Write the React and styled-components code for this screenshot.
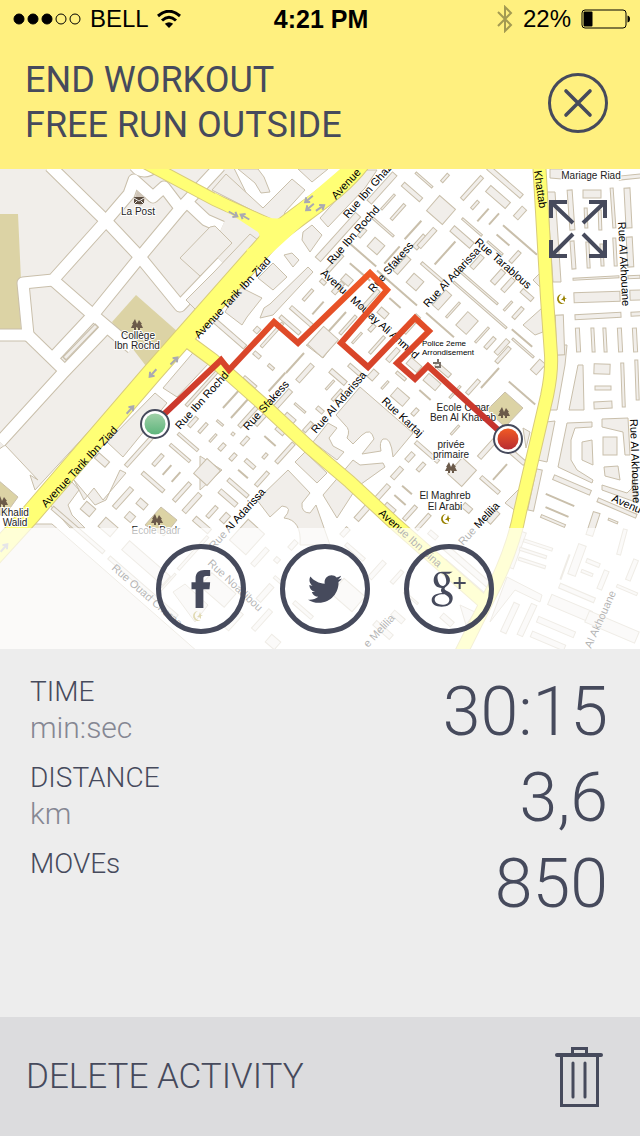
import styled, { createGlobalStyle } from "styled-components"
import { FaTwitter } from "react-icons/fa"


// city blocks: [center x, center y, length, thickness, angle]
const N = -48;
const S = 41;

const strips = [
    // north
    [382, 188, 38, 6, N], [338, 237, 60, 7, N], [388, 202, 20, 2, N], [398, 212, 20, 3, N], [412, 192, 24, 5, S],
    [383, 227, 28, 2, S], [413, 230, 24, 1, N], [420, 242, 16, 6, N], [376, 246, 13, 12, S], [392, 255, 22, 1, N],
    [362, 233, 10, 4, N], [335, 263, 22, 4, N], [363, 255, 34, 1, S], [360, 272, 26, 1, S], [402, 265, 20, 6, N],
    [415, 282, 13, 12, S], [397, 288, 52, 1, S], [347, 280, 10, 8, S], [323, 282, 6, 4, S], [338, 288, 14, 5, N],
    [383, 313, 10, 7, S], [395, 303, 14, 1, S], [308, 295, 14, 3, N], [318, 308, 16, 1, N], [302, 317, 30, 4, S],
    [290, 325, 26, 4, S], [272, 335, 32, 3, N], [337, 322, 26, 1, N], [348, 325, 24, 3, N], [323, 342, 24, 20, N],
    [357, 338, 14, 2, N], [257, 330, 6, 5, N], [230, 334, 40, 5, S], [370, 300, 26, 4, N], [372, 328, 8, 4, N],
    [411, 324, 22, 6, N], [377, 345, 22, 3, N],
    // north east
    [424, 180, 22, 2, S], [445, 178, 10, 3, N], [472, 188, 30, 4, N], [505, 182, 44, 5, S], [498, 197, 26, 8, S],
    [441, 210, 21, 20, S], [475, 205, 10, 3, N], [483, 215, 16, 1, N], [494, 219, 14, 1, N], [520, 213, 13, 6, N],
    [472, 227, 26, 2, S], [462, 237, 26, 7, S], [427, 238, 24, 5, N], [445, 253, 30, 1, N], [503, 240, 16, 1, S],
    [520, 240, 44, 1, S], [477, 262, 16, 5, N], [495, 248, 20, 2, S], [432, 272, 28, 3, S], [478, 287, 52, 2, S],
    [515, 257, 14, 4, N], [498, 277, 16, 6, N], [508, 285, 16, 5, N], [527, 295, 14, 5, S], [480, 305, 70, 2, S],
    [442, 300, 20, 8, N], [518, 313, 14, 4, N], [508, 306, 12, 2, N], [467, 323, 18, 14, N], [453, 310, 20, 2, N],
    [522, 338, 26, 1, S], [482, 335, 20, 2, N], [490, 343, 14, 4, N], [502, 347, 18, 5, N], [440, 325, 36, 1, S],
    // behind the right avenue
    [571, 210, 40, 5, 86], [592, 194, 18, 8, 0], [586, 218, 20, 3, 88], [600, 220, 20, 3, 88], [613, 208, 40, 3, 86],
    [628, 208, 40, 6, 87], [573, 255, 28, 4, 86], [588, 255, 26, 3, 87], [602, 255, 22, 3, 87], [615, 252, 28, 3, 87],
    [630, 252, 30, 6, 87], [596, 278, 46, 2, -3], [634, 277, 12, 3, -3], [597, 297, 46, 10, -2], [637, 295, 14, 10, -2],
    [598, 316, 46, 5, -3], [637, 314, 12, 4, -3], [560, 335, 40, 8, 88], [578, 340, 24, 4, 87], [593, 340, 24, 3, 87],
    [605, 340, 24, 3, 87], [620, 340, 24, 4, 87], [635, 340, 24, 4, 87], [602, 369, 16, 10, 2], [603, 388, 16, 4, 0],
    [603, 405, 18, 7, -3], [623, 385, 44, 3, 88], [637, 380, 40, 3, 88], [610, 446, 14, 18, 0], [572, 485, 40, 5, 23],
    [617, 508, 42, 4, 23], [560, 500, 30, 1, 23], [557, 512, 24, 1, 23], [553, 521, 26, 3, 23], [593, 524, 24, 7, -72],
    [535, 490, 42, 6, -78], [613, 521, 10, 2, 23], [630, 177, 22, 4, -6],
    // center
    [257, 355, 8, 4, S], [271, 367, 7, 3, S], [295, 363, 26, 1, N], [305, 373, 22, 5, N], [338, 377, 20, 5, S],
    [355, 370, 16, 4, S], [373, 375, 10, 7, N], [385, 385, 10, 2, N], [330, 385, 12, 2, N], [337, 395, 14, 3, N],
    [400, 397, 16, 11, S], [320, 410, 8, 4, S], [415, 412, 8, 4, N], [300, 408, 14, 2, S], [290, 418, 12, 5, S],
    [277, 382, 24, 1, N], [250, 382, 16, 3, S], [282, 400, 26, 5, N], [263, 417, 22, 4, N], [248, 417, 26, 4, N],
    [232, 398, 26, 1, N], [240, 408, 26, 1, N], [220, 423, 8, 2, S], [233, 434, 3, 3, S], [213, 438, 10, 2, N],
    [245, 441, 10, 4, N], [222, 447, 8, 4, N], [233, 457, 8, 4, N], [270, 441, 14, 1, S], [280, 431, 10, 4, S],
    [265, 456, 6, 3, N], [285, 453, 26, 4, N], [308, 427, 12, 4, N], [250, 464, 12, 4, S], [243, 474, 12, 1, S],
    [262, 479, 18, 4, N], [238, 488, 26, 4, S], [228, 498, 22, 5, S], [212, 512, 14, 4, N], [225, 518, 10, 6, N],
    [380, 495, 26, 5, N], [363, 512, 20, 6, N], [397, 473, 14, 5, N], [410, 457, 10, 5, N], [421, 467, 10, 4, N],
    [407, 490, 12, 1, S], [400, 500, 14, 1, S], [410, 513, 18, 4, N], [390, 508, 12, 5, S], [393, 355, 16, 5, N],
    [401, 376, 12, 3, S], [414, 365, 14, 8, S],
    // left of the red pin
    [432, 382, 16, 9, S], [473, 387, 18, 4, N], [490, 378, 26, 1, N], [503, 355, 20, 4, N], [523, 348, 28, 2, S],
    [538, 367, 14, 8, N], [522, 393, 34, 1, S], [455, 430, 12, 2, N], [488, 448, 26, 5, N], [427, 452, 30, 4, S],
    [515, 455, 26, 5, S], [462, 472, 22, 19, N], [490, 485, 24, 4, S], [500, 472, 20, 1, N], [467, 508, 10, 6, S],
    [493, 517, 14, 6, N], [423, 522, 20, 4, N], [443, 370, 18, 5, S], [455, 392, 16, 2, N], [425, 395, 14, 1, S],
    // around the green pin
    [144, 446, 54, 4, N], [205, 385, 56, 3, N], [188, 442, 26, 3, S], [180, 453, 26, 3, S], [158, 460, 14, 4, N],
    [167, 470, 12, 1, N], [176, 477, 12, 1, N], [153, 482, 28, 4, S], [193, 422, 12, 4, N], [203, 428, 12, 3, N],
    [207, 472, 20, 18, N], [182, 492, 24, 4, N], [192, 503, 24, 5, N], [202, 525, 20, 6, S], [123, 498, 26, 5, N],
    [142, 504, 10, 7, S], [130, 517, 8, 8, S], [88, 509, 12, 10, S], [102, 460, 14, 7, S], [108, 527, 16, 12, S],
    // bottom
    [78, 530, 68, 4, S], [143, 587, 90, 4, S], [146, 563, 54, 12, S], [168, 582, 22, 2, N], [193, 553, 44, 3, N],
    [218, 590, 32, 18, S], [233, 620, 22, 8, N], [247, 537, 28, 22, N], [260, 557, 22, 5, N], [277, 560, 5, 5, S],
    [265, 593, 20, 6, N], [262, 620, 26, 5, N], [273, 642, 12, 10, S], [278, 580, 10, 3, S], [293, 545, 10, 5, N],
    [303, 610, 24, 4, S], [345, 532, 10, 5, N], [355, 552, 24, 4, S], [348, 595, 28, 20, S], [377, 570, 22, 5, N],
    [397, 577, 16, 4, N], [433, 535, 10, 5, S], [468, 567, 60, 6, S], [466, 580, 58, 5, S], [447, 620, 14, 6, S],
    [383, 630, 22, 6, S], [398, 617, 14, 6, S], [411, 598, 18, 2, S], [517, 550, 38, 6, -70], [538, 545, 30, 3, 18],
    [533, 553, 28, 3, 18], [532, 563, 28, 3, 18], [565, 567, 26, 1, -70], [577, 560, 32, 8, -70], [593, 563, 14, 4, 22],
    [587, 573, 12, 3, 22], [622, 542, 26, 4, -75], [510, 618, 32, 6, -65], [527, 620, 34, 6, -65], [577, 593, 38, 5, 23],
    [570, 608, 44, 11, 23], [556, 627, 40, 6, 23], [548, 641, 36, 6, 23], [612, 627, 54, 12, 23], [627, 590, 22, 3, 23],
    [603, 580, 20, 5, -68], [632, 570, 22, 5, -68],
]

const blocks = [
    "212,190 226,174 263,208 292,179 305,190 285,212 282,222 275,222",
    "238,169 255,183 261,193 270,192 264,177 258,169",
    "298,169 312,182 328,169",
    "210,227 215,226 232,243 200,276 180,258",
    "250,234 262,243 208,300 196,310 186,300 214,272",
    "312,225 322,235 310,252 302,240 303,232",
    "320,218 328,227 365,188 377,170 363,170",
    "284,255 292,253 299,260 293,267",
    "273,263 287,277 273,290 258,278",
    "308,267 313,272 273,315 260,318 264,308 270,304",
    "240,287 262,298 247,317 242,325 225,312",
    "523,325 542,308 543,332 535,335",
    "533,280 540,273 541,288",
    "547,192 555,192 561,282 553,282",
    "557,345 567,345 565,365 557,410 548,410 553,385",
    "578,365 583,365 584,410 569,410",
    "546,422 555,421 547,462 538,460",
    "567,423 592,422 592,427 575,428 571,440 571,460 577,470 593,480 592,483 558,467",
    "602,419 628,418 630,455 625,455 623,432 602,427",
    "582,442 592,440 593,465 582,460",
    "604,467 618,466 620,480 605,476",
    "602,485 627,493 632,488 633,470 638,503 602,490",
    "505,503 525,483 517,512",
    "523,428 530,432 526,448",
    "306,345 333,345 323,358",
    "200,456 222,470 200,490",
    "328,423 337,428 329,438 333,446 344,452 337,460 313,442",
    "295,462 305,452 327,473 317,483",
    "353,460 360,465 383,463 385,467 357,487 337,518 323,495",
    "163,388 197,348 210,362 177,397",
    "155,393 167,403 123,457 107,442",
    "74,480 95,505 106,500 120,470 126,473 103,500 94,488 84,500",
    "50,505 72,482 79,490 68,505 72,515 85,528 70,528",
    "173,592 185,584 208,605 195,622",
    "507,577 542,595 540,602 515,590 490,622",
    "460,605 475,612 466,625",
    "550,178 550,169 562,169 562,179",
]

const yellowRoads = [
    ["M362 160 C340 190 310 206 273 236 L153 372 L30 515 L-20 570", 19],
    ["M140 160 L215 200 L268 224", 11],
    ["M190 343 L213 360 L267 408 L310 448 L350 482 L393 522 L486 604", 12],
    ["M539 160 L547 298 L551 355 Q552 372 547 396 L520 512 Q514 545 495 585 L460 655", 12],
]

const whiteRoads = [
    "M50 166 L107 222 L140 257 L180 306 L222 262",
    "M180 208 L164 187 L153 197 L134 180 L129 194 L105 222 L53 280 L23 283 L28 335 L-5 335",
    "M28 335 L64 370",
    "M220 166 L180 209 L140 257 L93 315 L50 361",
    "M190 205 L206 220 L222 227",
    "M53 280 L93 315 L132 348",
    "M107 327 L62 374 L0 442",
    "M135 166 Q143 176 156 166",
]

const labels = [
    [199, 339, -47, "Avenue Tarik Ibn Ziad"], [46, 508, -47, "Avenue Tarik Ibn Ziad"], [336, 200, -47, "Avenue"],
    [348, 219, -49, "Rue Ibn Ghaz"], [332, 265, -49, "Rue Ibn Rochd"], [373, 293, -49, "Rue Sfakess"],
    [320, 274, 42, "Avenue Moulay Ali Ahmed"], [428, 308, -47, "Rue Al Adarissa"], [474, 243, 41, "Rue Tarablous"],
    [618, 222, 87, "Rue Al Akhouane"], [534, 171, 82, "Khattab"], [381, 402, 43, "Rue Kartaj"],
    [316, 434, -49, "Rue Al Adarissa"], [248, 431, -48, "Rue Sfakess"], [180, 430, -48, "Rue Ibn Rochd"],
    [214, 550, -48, "Rue Al Adarissa"], [378, 514, 42, "Avenue Ibn Sina"], [463, 546, -47, "Rue Melilia"],
    [368, 648, -47, "e Melilia"], [591, 649, -66, "Al Akhouane"], [111, 569, 41, "Rue Ouad Cheraa"],
    [207, 564, 43, "Rue Noadibou"], [630, 419, 88, "Rue Al Akhouane"], [611, 501, 24, "Avenu"],
]

const places = [
    [138, 215, "La Post"], [138, 339, "Collège"], [137, 349, "Ibn Rochd"], [591, 179, "Mariage Riad"],
    [463, 411, "Ecole Omar"], [463, 421, "Ben Al Khattab"], [451, 448, "privée"], [451, 458, "primaire"],
    [445, 499, "El Maghreb"], [445, 510, "El Arabi"], [15, 516, "Khalid"], [15, 526, "Walid"], [156, 534, "Ecole Badr"],
]

const trees = [[137, 324], [157, 519], [504, 412], [451, 467], [2, 501]];
const moons = [[561, 299], [445, 519], [197, 616]];
const laneArrows = [
    [233, 214, 30], [245, 217, 210], [309, 199, 140], [310, 207, 140], [320, 208, -35],
    [153, 373, 132], [174, 361, -45], [130, 410, -48], [4, 548, -48],
];


export default function App() {

    const stats = [
        { name: "TIME", unit: "min:sec", value: "30:15" },
        { name: "DISTANCE", unit: "km", value: "3,6" },
        { name: "MOVEs", unit: "", value: "850" },
    ]

    return (
        <Page>
            <GlobalStyle />
            <Header>
                <StatusBar />
                <TitleRow>
                    <h1>END WORKOUT<br />FREE RUN OUTSIDE</h1>
                    <IconButton aria-label="Close">
                        <svg width="60" height="60" viewBox="0 0 60 60" fill="none" stroke="#464a5c" strokeWidth="3">
                            <circle cx="30" cy="30" r="28.5" />
                            <path d="M18 18 L42 42 M42 18 L18 42" strokeWidth="3.6" strokeLinecap="round" />
                        </svg>
                    </IconButton>
                </TitleRow>
            </Header>
            <MapArea>
                <CityMap />
                <ExpandButton aria-label="Full screen">
                    <svg width="60" height="60" viewBox="0 0 60 60" fill="none" stroke="#464a5c" strokeWidth="4">
                        <path d="M3 19 V3 H19 M3 3 L25 24" />
                        <path d="M41 3 H57 V19 M57 3 L35 24" />
                        <path d="M3 41 V57 H19 M3 57 L25 35" />
                        <path d="M41 57 H57 V41 M57 57 L35 35" />
                    </svg>
                </ExpandButton>
                <ShareBar>
                    <ShareLink href="#facebook" aria-label="Facebook">
                        <svg width="20" height="38" viewBox="576 150 56 112" fill="currentColor">
                            <path d="M588 262V207H576V186H588V175C588 158 598 150 614 150H631V168H620C613 168 611 171 611 176V186H631L629 207H611V262Z" />
                        </svg>
                    </ShareLink>
                    <ShareLink href="#twitter" aria-label="Twitter">
                        <FaTwitter size={34} />
                    </ShareLink>
                    <ShareLink href="#google" aria-label="Google plus">
                        <svg width="36" height="36" viewBox="18 18 106 108" fill="currentColor" fillRule="evenodd">
                            <path d="M50 20 H82 L72 26 H62 C78 36 78 54 62 65 C55 70 57 74 65 78 C78 84 83 92 82 102 C80 118 66 125 49 125 C31 125 19 118 19 105 C19 93 31 85 51 84 C46 80 46 74 49 69 C34 69 25 59 25 46 C25 30 36 20 50 20 Z M48 25 C39 25 35 32 37 43 C39 56 46 64 54 63 C62 61 64 53 62 43 C60 32 55 25 48 25 Z M54 88 C38 88 28 94 28 103 C28 113 38 119 51 119 C64 119 72 113 72 104 C72 96 67 94 58 88 Z" />
                            <path d="M85 51 H100 V36 H106 V51 H121 V57 H106 V72 H100 V57 H85 Z" />
                        </svg>
                    </ShareLink>
                </ShareBar>
            </MapArea>
            <Stats>
                {stats.map(({ name, unit, value }) => (
                    <StatRow key={name}>
                        <dt>{name}<small>{unit}</small></dt>
                        <dd>{value}</dd>
                    </StatRow>
                ))}
            </Stats>
            <DeleteButton>
                DELETE ACTIVITY
                <svg width="48" height="62" viewBox="0 0 48 62" fill="none" stroke="#464a5c" strokeWidth="3">
                    <path d="M17.500 8 V2.500 H31.500 V8" />
                    <path d="M2 9 H46" strokeWidth="4" strokeLinecap="round" />
                    <path d="M6.500 9 V59.500 H42.500 V9" />
                    <path d="M18 17 V51 M30 17 V51" strokeLinecap="round" />
                </svg>
            </DeleteButton>
        </Page>
    )
}

function StatusBar() {
    return (
        <DivStatus>
            <Carrier>
                <svg width="70" height="14" viewBox="0 0 70 14" stroke="#000">
                    {[7, 21, 35, 49, 63].map((x, i) => (
                        <circle key={x} cx={x} cy="7" r="5" fill={i < 3 ? "#000" : "none"} />
                    ))}
                </svg>
                BELL
                <svg width="24" height="18" viewBox="0 0 24 18" fill="none" stroke="#000" strokeWidth="3">
                    <path d="M1 6 Q12 -3.500 23 6" />
                    <path d="M5 10.500 Q12 4 19 10.500" />
                    <path d="M12 18 L7.800 13.800 Q12 10.500 16.200 13.800 Z" fill="#000" stroke="none" />
                </svg>
            </Carrier>
            <strong>4:21 PM</strong>
            <Power>
                <svg width="16" height="28" viewBox="0 0 16 28" fill="none" stroke="#a39a52" strokeWidth="2">
                    <path d="M1 7 L14 20 L8 26 V2 L14 8 L1 21" />
                </svg>
                22%
                <svg width="49" height="20" viewBox="0 0 49 20">
                    <rect x="1" y="1" width="44" height="18" rx="3" fill="none" stroke="#000" />
                    <rect x="2.500" y="2.500" width="9" height="15" rx="1" />
                    <path d="M46.500 6.500 Q49 7 49 10 Q49 13 46.500 13.500 Z" />
                </svg>
            </Power>
        </DivStatus>
    )
}

function CityMap() {
    return (
        <MapSvg viewBox="0 169 640 480" preserveAspectRatio="xMidYMid slice" role="img" aria-label="Workout route">
            <defs>
                <linearGradient id="route" gradientUnits="userSpaceOnUse" x1="0" y1="270" x2="0" y2="440">
                    <stop offset="0" stopColor="#f15a24" />
                    <stop offset="1" stopColor="#c1302f" />
                </linearGradient>
                <linearGradient id="start" x1="0" y1="0" x2="0" y2="1">
                    <stop offset="0" stopColor="#a0d0a8" />
                    <stop offset="1" stopColor="#5eb57c" />
                </linearGradient>
                <linearGradient id="finish" x1="0" y1="0" x2="0" y2="1">
                    <stop offset="0" stopColor="#f15a24" />
                    <stop offset="1" stopColor="#b82c32" />
                </linearGradient>
            </defs>

            <g fill="#f1eeea" stroke="#c9bfab">
                <polygon points="-2,160 230,160 262,225 262,243 35,490 30,475 38,480 5,445 -2,450" />
                <polygon points="-2,560 35,524 52,524 198,652 -2,652" />
            </g>
            <polygon points="-2,214 18,214 21,280 18,290 21,329 -2,330" fill="#dcd3a5" />
            <polygon points="136,295 178,332 146,366 112,322" fill="#dcd3a5" />
            {[["#c9bfab", 13], ["#fff", 11]].map(([color, width]) => (
                <g key={color} fill="none" stroke={color} strokeWidth={width} strokeLinejoin="round">
                    {whiteRoads.map(d => <path key={d} d={d} />)}
                </g>
            ))}
            <path d="M97 325 L64 359" stroke="#c9bfab" strokeWidth="5" />
            <path d="M96 326 L65 358" stroke="#f1eeea" strokeWidth="3" />

            <g fill="#f1eeea" stroke="#c9bfab">
                {blocks.map(points => <polygon key={points} points={points} />)}
                <path d="M360 387 L413 433 L393 457 Q391 436 383 439 Q379 442 381 451 L362 454 L374 439 Q371 427 362 435 L353 444 L347 438 Q351 430 345 425 L336 415 Z" />
                <path d="M288 470 L310 493 L302 503 Q301 513 310 513 L316 505 L323 525 L330 545 H300 Q302 520 284 518 Q294 507 282 506 L270 517 L257 500 Z" />
                {strips.map(([x, y, length, width, angle]) => (
                    <rect
                        key={`${x}-${y}`}
                        x={x - length / 2}
                        y={y - width / 2}
                        width={length}
                        height={width}
                        transform={`rotate(${angle} ${x} ${y})`}
                    />
                ))}
            </g>
            <g fill="#dcd3a5" stroke="#c9bfab">
                <polygon points="505,392 523,408 505,427 487,410" />
                <polygon points="161,507 177,520 164,536 145,525" />
                <polygon points="-2,480 18,497 5,515 -2,515" />
            </g>

            {[["#d9cc7a", 2], ["#ffff75", 0]].map(([color, extra]) => (
                <g key={color} fill="none" stroke={color}>
                    {yellowRoads.map(([d, width]) => <path key={d} d={d} strokeWidth={width + extra} />)}
                </g>
            ))}
            <path d="M215 193 Q270 225 284 217 L345 165 H368 L262 262 L246 250 Q264 240 258 232 L215 204 Z" fill="#ffff75" />

            <g fill="none" stroke="#aaa9b2" strokeWidth="2">
                {laneArrows.map(([x, y, angle]) => (
                    <path key={`${x}-${y}`} d="M-5 0 H5 M1 -3 L5 0 L1 3" transform={`translate(${x} ${y}) rotate(${angle})`} />
                ))}
            </g>

            <MapText>
                {labels.map(([x, y, angle, text]) => (
                    <text key={`${x}-${y}`} transform={`translate(${x} ${y}) rotate(${angle})`}>{text}</text>
                ))}
            </MapText>
            <PlaceText>
                {places.map(([x, y, text]) => <text key={`${x}-${y}`} x={x} y={y}>{text}</text>)}
            </PlaceText>
            <SmallText>
                <text x="422" y="346">Police 2eme</text>
                <text x="422" y="355">Arrondisement</text>
            </SmallText>

            {trees.map(([x, y]) => (
                <path
                    key={x}
                    d="M-2 -5 L-5 0 H-4 L-6 4 H-3 V6 H-1 V3 L1 4 V6 H3 V4 H6 L4 0 H5 L2 -4 L0 0 Z"
                    fill="#6b5a4a"
                    transform={`translate(${x} ${y})`}
                />
            ))}
            {moons.map(([x, y]) => (
                <g key={x} fill="#998200" transform={`translate(${x} ${y})`}>
                    <path d="M1 -5 A5 5 0 1 0 4 4 A4 4 0 0 1 1 -5 Z" />
                    <path d="M3 -4 L4 -1 L6 -1 L4 0 L4 3 L2 1 L0 1 L2 -1 Z" />
                </g>
            ))}
            <path d="M137 191 L146 198 L141 206 L134 202 Z" fill="#cfc5b8" />
            <rect x="134" y="197" width="10" height="7" fill="#5c4d40" />
            <path d="M134 198 L139 201 L144 198 M134 204 L137 201 M144 204 L141 201" fill="none" stroke="#eee" />
            <path d="M433 363 H440 V367 H435 M438 359 V364" fill="none" stroke="#7a7169" strokeWidth="2" />

            <path
                d="M160 418 L221 360 L229 370 L274 322 L298 343 L370 273 L387 290 L341 343 L368 367 L415 318 L429 331 L397 363 L415 379 L428 366 L508 439"
                fill="none"
                stroke="url(#route)"
                strokeWidth="6"
            />
            <Pin x={155} y={424} fill="url(#start)" />
            <Pin x={508} y={439} fill="url(#finish)" />
        </MapSvg>
    )
}

function Pin({ x, y, fill }) {
    return (
        <g>
            <circle cx={x} cy={y} r="14" fill="#fff" stroke="#464a5c" strokeWidth="2" />
            <circle cx={x} cy={y} r="10.500" fill={fill} />
        </g>
    )
}


const GlobalStyle = createGlobalStyle`
    * {
        box-sizing: border-box;
    }

    body, h1, dl, dt, dd{
        margin: 0;
    }

    button{
        border: none;
        padding: 0;
        background: none;
        cursor: pointer;
    }

    svg{
        display: block;
        flex-shrink: 0;
    }
`

const Page = styled.div`
    min-height: 100vh;
    display: flex;
    flex-direction: column;

    font-family: Roboto, sans-serif;
    color: #464a5c;
    background-color: #ededed;
`

const Header = styled.header`
    padding-bottom: 21px;
    background-color: #fff07f;
`

const DivStatus = styled.div`
    height: 38px;
    padding: 0 10px 0 12px;

    display: grid;
    grid-template-columns: 1fr auto 1fr;
    align-items: center;

    font-family: "Liberation Sans", Arial, sans-serif;
    font-size: 24px;
    line-height: 38px;
    color: #000;

    strong{
        font-size: 25px;
    }
`

const Carrier = styled.div`
    display: flex;
    align-items: center;
    gap: 8px;
`

const Power = styled(Carrier)`
    justify-content: flex-end;
    gap: 10px;
`

const TitleRow = styled.div`
    padding: 20px 32px 0 25px;

    display: flex;
    justify-content: space-between;
    align-items: center;

    h1{
        font-size: 36px;
        font-weight: 400;
        line-height: 45px;
    }
`

const IconButton = styled.button`
    width: 60px;
    height: 60px;
`

const MapArea = styled.section`
    position: relative;
    aspect-ratio: 4 / 3;
    overflow: hidden;
    background-color: #fff;
`

const MapSvg = styled.svg`
    width: 100%;
    height: 100%;
`

const MapText = styled.g`
    font-family: "Liberation Sans", Arial, sans-serif;
    font-size: 11px;
    fill: #000;
`

const PlaceText = styled(MapText)`
    font-size: 10px;
    text-anchor: middle;
    fill: #222;
    stroke: #fff;
    stroke-width: 2px;
    paint-order: stroke;
`

const SmallText = styled(MapText)`
    font-size: 8px;
`

const ExpandButton = styled(IconButton)`
    position: absolute;
    top: 30px;
    right: 32px;
`

const ShareBar = styled.nav`
    position: absolute;
    left: 0;
    right: 0;
    bottom: 0;
    height: 121px;
    padding-left: 10px;

    display: flex;
    justify-content: center;
    align-items: center;
    gap: 34px;

    background-color: rgba(255, 255, 255, 0.7);
`

const ShareLink = styled.a`
    width: 90px;
    height: 90px;

    display: flex;
    justify-content: center;
    align-items: center;

    border: 5px solid #464a5c;
    border-radius: 50%;
    color: #464a5c;
`

const Stats = styled.dl`
    flex: 1;
    padding: 25px 32px 0 30px;
    font-weight: 300;
`

const StatRow = styled.div`
    height: 86px;
    display: flex;
    justify-content: space-between;

    dt{
        font-size: 28px;
        line-height: 36px;
    }

    small{
        display: block;
        font-size: 30px;
        color: #858793;
    }

    dd{
        font-size: 68px;
        font-weight: 350;
        line-height: 76px;
    }
`

const DeleteButton = styled.button`
    && {
        height: 119px;
        padding: 0 37px 0 26px;
        background-color: #dcdcde;
    }

    display: flex;
    justify-content: space-between;
    align-items: center;

    font-family: inherit;
    font-size: 35px;
    font-weight: 300;
    color: #464a5c;
`
